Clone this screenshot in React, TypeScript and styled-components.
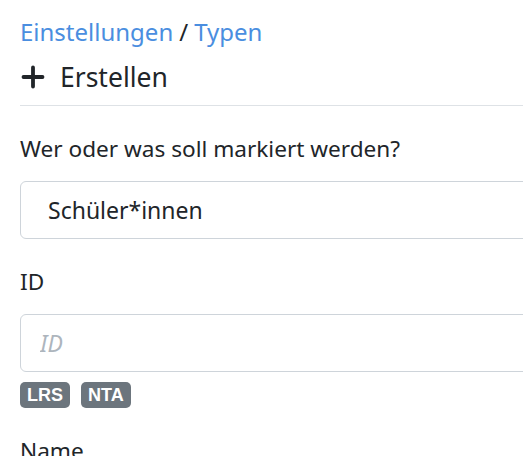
import React from "react";
import styled, {createGlobalStyle} from "styled-components";

const GlobalStyle = createGlobalStyle`
  html, body {
    margin: 0;
    padding: 0;
    background: #fff;
    overflow: hidden;
  }
  body {
    font-family: "Noto Sans", "Open Sans", sans-serif;
    color: #212529;
  }
`

const App: React.FunctionComponent = () => {
  return (
    <>
      <GlobalStyle/>
      <StyledPage>
        <StyledBreadcrumb>
          <StyledCrumbLink href="#">Einstellungen</StyledCrumbLink>
          <StyledCrumbSep>/</StyledCrumbSep>
          <StyledCrumbLink href="#">Typen</StyledCrumbLink>
        </StyledBreadcrumb>
        <StyledTitle>
          <StyledPlus viewBox="0 0 26 26" aria-hidden>
            <path d="M13 3.5v19M3.5 13h19" stroke="currentColor" strokeWidth="3.8" strokeLinecap="round"/>
          </StyledPlus>
          Erstellen
        </StyledTitle>
        <StyledRule/>

        <StyledField>
          <StyledLabel>Wer oder was soll markiert werden?</StyledLabel>
          <StyledSelect>Schüler*innen</StyledSelect>
        </StyledField>

        <StyledField>
          <StyledLabel>ID</StyledLabel>
          <StyledInput placeholder="ID"/>
          <StyledBadges>
            <StyledBadge>LRS</StyledBadge>
            <StyledBadge>NTA</StyledBadge>
          </StyledBadges>
        </StyledField>

        <StyledField>
          <StyledLabel>Name</StyledLabel>
          <StyledInput placeholder="Name"/>
        </StyledField>
      </StyledPage>
    </>
  )
}

const StyledPage = styled.div`
  width: 620px;
  padding: 14px 0 0 20px;
  box-sizing: border-box;
`
const StyledBreadcrumb = styled.div`
  display: flex;
  align-items: baseline;
  gap: 6px;
  font-size: 24px;
  line-height: 36px;
`
const StyledCrumbLink = styled.a`
  color: #4a8ee0;
  text-decoration: none;
`
const StyledCrumbSep = styled.span`
  color: #212529;
`
const StyledTitle = styled.div`
  display: flex;
  align-items: center;
  gap: 14px;
  font-size: 26.5px;
  line-height: 36px;
  margin-top: 9px;
`
const StyledPlus = styled.svg`
  width: 26px;
  height: 26px;
  color: #212529;
`
const StyledRule = styled.div`
  height: 1px;
  background: #dee2e6;
  margin-top: 10px;
`
const StyledField = styled.div`
  margin-top: 27px;
`
const StyledLabel = styled.div`
  font-size: 22.6px;
  line-height: 32px;
  margin-bottom: 16px;
`
const StyledSelect = styled.div`
  height: 58px;
  box-sizing: border-box;
  border: 1px solid #ced4da;
  border-radius: 6px;
  padding: 0 27px;
  display: flex;
  align-items: center;
  font-size: 23px;
  color: #212529;
`
const StyledInput = styled.input`
  display: block;
  width: 100%;
  height: 58px;
  box-sizing: border-box;
  border: 1px solid #ced4da;
  border-radius: 6px;
  padding: 0 19px;
  font-family: inherit;
  font-size: 23px;
  outline: none;
  &::placeholder {
    color: #adb5bd;
    font-style: italic;
  }
`
const StyledBadges = styled.div`
  display: flex;
  gap: 11px;
  margin-top: 10px;
  margin-bottom: 12px;
`
const StyledBadge = styled.span`
  display: inline-flex;
  align-items: center;
  height: 26px;
  padding: 0 7px;
  border-radius: 5px;
  background: #6c757d;
  color: #fff;
  font-family: "Liberation Sans", Arial, sans-serif;
  font-weight: 700;
  font-size: 18px;
`
export default App
